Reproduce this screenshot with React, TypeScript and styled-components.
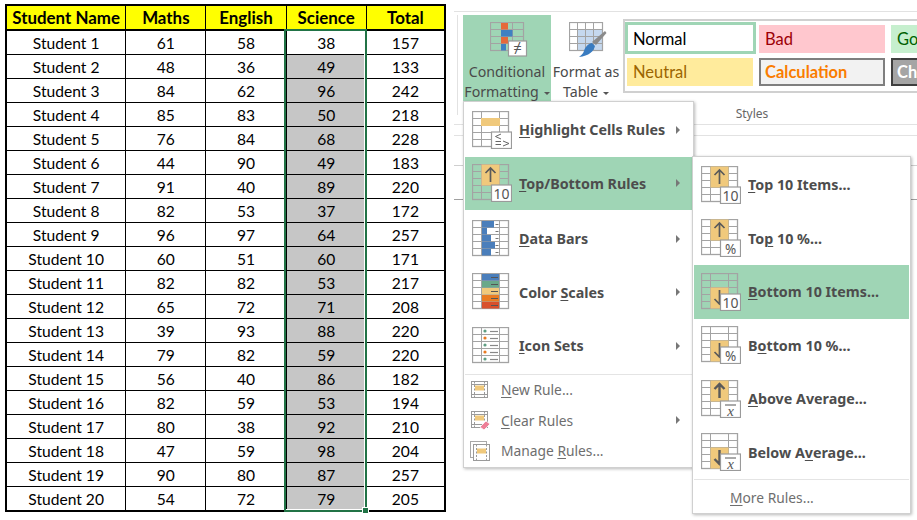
import React from "react";
import styled, { createGlobalStyle } from "styled-components";

const Global = createGlobalStyle`
  html, body { margin: 0; padding: 0; background: #fff; }
  body { width: 917px; height: 520px; overflow: hidden; }
`;

const UI_FONT = `"Noto Sans", "Open Sans", sans-serif`;
const CELL_FONT = `Lato, "Liberation Sans", sans-serif`;
const GREEN = "#9fd5b5";

const Page = styled.div`
  display: flex;
  width: 917px;
  height: 520px;
  overflow: hidden;
`;

const SheetWrap = styled.div`
  position: relative;
  flex: none;
  width: 441px;
  margin: 4px 0 0 5px;
  align-self: flex-start;
`;

const Sheet = styled.table`
  border-collapse: separate;
  border-spacing: 0;
  table-layout: fixed;
  box-sizing: border-box;
  width: 441px;
  border: 2px solid #000;
  font-family: ${CELL_FONT};
  font-size: 15.6px;
  color: #000;
`;

const HeadCell = styled.th<{ $w: number }>`
  width: ${(p) => p.$w}px;
  height: 23px;
  padding: 0;
  box-sizing: content-box;
  background: #ffff00;
  font-size: 16.9px;
  font-weight: 700;
  text-align: center;
  white-space: nowrap;
  border-bottom: 2px solid #000;
  border-right: 1px solid #000;
  &:last-child { border-right: none; }
`;

const Cell = styled.td<{ $shaded?: boolean }>`
  height: 23px;
  padding: 0;
  box-sizing: content-box;
  text-align: center;
  background: ${(p) => (p.$shaded ? "#c6c6c6" : "#fff")};
  border-bottom: 1px solid #000;
  border-right: 1px solid #000;
  &:last-child { border-right: none; }
  tr:last-child > & { border-bottom: none; }
`;

const Selection = styled.div`
  position: absolute;
  left: 279px;
  top: 25px;
  width: 83px;
  height: 483px;
  box-sizing: border-box;
  border: 2px solid #217346;
  box-shadow: inset -1px -1px 0 #fff;
  pointer-events: none;
`;

const FillHandle = styled.div`
  position: absolute;
  right: -4px;
  bottom: -4px;
  width: 5px;
  height: 5px;
  background: #217346;
  border: 1px solid #fff;
`;

const Pane = styled.div`
  position: relative;
  flex: 1;
  padding: 11px 0 0 8px;
  font-family: ${UI_FONT};
  color: #444;
  overflow: hidden;
`;

const Ribbon = styled.div`
  display: flex;
  align-items: flex-start;
  padding: 3px 0 0 1px;
  border-top: 1.5px solid #e2e2e2;
  border-bottom: 1.5px solid #e2e2e2;
  overflow: hidden;
  box-sizing: border-box;
  height: 114px;
`;

const RibbonSep = styled.div`
  flex: none;
  width: 1px;
  height: 100px;
  margin: 0 5px 0 2px;
  background: #e2e2e2;
`;

const SheetRule = styled.div<{ $gap: number; $tone: string }>`
  height: 1px;
  margin-top: ${(p) => p.$gap}px;
  background: ${(p) => p.$tone};
`;

const BigButton = styled.div<{ $active?: boolean; $w: number }>`
  flex: none;
  display: flex;
  flex-direction: column;
  align-items: center;
  width: ${(p) => p.$w}px;
  height: 86px;
  padding-top: 7px;
  box-sizing: border-box;
  background: ${(p) => (p.$active ? GREEN : "transparent")};
`;

const BigLabel = styled.div`
  font-size: 14.2px;
  line-height: 20px;
  margin-top: 5px;
  text-align: center;
  white-space: nowrap;
  color: #4a4a4a;
`;

const Caret = styled.span`
  display: inline-block;
  width: 0;
  height: 0;
  margin-left: 5px;
  vertical-align: 2px;
  border-left: 3px solid transparent;
  border-right: 3px solid transparent;
  border-top: 3px solid #555;
`;

const StylesGroup = styled.div`
  flex: none;
  width: 294px;
  margin: 4px 0 0 2px;
`;

const Gallery = styled.div`
  display: grid;
  grid-template-columns: repeat(3, 132px);
  grid-auto-rows: 33px;
  height: 74px;
  box-sizing: border-box;
  padding-top: 1px;
  border: 2px solid #d0d0d0;
  border-right: none;
`;

const StyleChip = styled.div<{ $bg: string; $fg: string; $bold?: boolean; $edge?: string; $selected?: boolean }>`
  display: flex;
  align-items: center;
  box-sizing: border-box;
  height: ${(p) => (p.$selected ? "32px" : "28px")};
  width: ${(p) => (p.$selected ? "131px" : "126px")};
  margin: ${(p) => (p.$selected ? "0" : "3px 0 0 2px")};
  padding-left: ${(p) => (p.$selected ? "5px" : p.$edge ? "4px" : "6px")};
  padding-top: ${(p) => (p.$selected ? "1px" : "0")};
  background: ${(p) => p.$bg};
  color: ${(p) => p.$fg};
  border: ${(p) => (p.$selected ? `3px solid ${GREEN}` : p.$edge ? `2px solid ${p.$edge}` : "none")};
  font-family: ${CELL_FONT};
  font-size: 16.5px;
  font-weight: ${(p) => (p.$bold ? 700 : 400)};
  white-space: nowrap;
  overflow: hidden;
`;

const GroupLabel = styled.div`
  width: 258px;
  margin-top: 13px;
  text-align: center;
  font-size: 12px;
  line-height: 16px;
  color: #666;
`;

const Menu = styled.div<{ $left: number; $top: number; $w: number; $h: number }>`
  position: absolute;
  left: ${(p) => p.$left}px;
  top: ${(p) => p.$top}px;
  width: ${(p) => p.$w}px;
  height: ${(p) => p.$h}px;
  box-sizing: border-box;
  padding: 1px 1px 0 1px;
  background: #fff;
  border: 1px solid #d0d0d0;
  box-shadow: 1px 1px 3px rgba(0, 0, 0, 0.28);
`;

const BigItem = styled.div<{ $active?: boolean; $drop?: number }>`
  display: flex;
  align-items: center;
  height: 53.5px;
  margin-top: ${(p) => p.$drop ?? 0}px;
  padding: 0 12px 0 7px;
  box-sizing: border-box;
  background: ${(p) => (p.$active ? GREEN : "transparent")};
  font-size: 14.3px;
  font-weight: 700;
  color: #4d4d4d;
  white-space: nowrap;
`;

const ItemIcon = styled.span`
  flex: none;
  display: flex;
  width: 40px;
  height: 38px;
  margin-right: 7px;
`;

const SmallItem = styled.div`
  display: flex;
  align-items: center;
  height: 30.5px;
  padding: 0 12px 0 5px;
  font-size: 13.8px;
  color: #6e6e6e;
  white-space: nowrap;
`;

const SmallIcon = styled.span`
  flex: none;
  display: flex;
  width: 20px;
  height: 20px;
  margin-right: 11px;
`;

const MoreItem = styled.div`
  height: 34px;
  line-height: 35px;
  padding-left: 36px;
  font-size: 13.8px;
  color: #6e6e6e;
`;

const Chevron = styled.span`
  margin-left: auto;
  width: 0;
  height: 0;
  border-top: 4px solid transparent;
  border-bottom: 4px solid transparent;
  border-left: 4px solid #777;
`;

const MenuSep = styled.div<{ $mt: number }>`
  height: 1px;
  margin-top: ${(p) => p.$mt}px;
  background: #e4e4e4;
`;

const Key = styled.u`
  text-underline-offset: 2px;
  text-decoration-thickness: 1px;
`;

const LINE = "#a3a3a3";
const ORANGE = "#f0c97c";

function Grid() {
  return (
    <g stroke={LINE} strokeWidth="1" fill="none">
      <rect x="0.5" y="0.5" width="36" height="35" strokeWidth="1.3" />
      <path d="M9.5 0.5V35.5M27.5 0.5V35.5M0.5 7.5H36.5M0.5 14.5H36.5M0.5 21.5H36.5M0.5 28.5H36.5" />
    </g>
  );
}

function BadgeBox({ children }: { children: React.ReactNode }) {
  return (
    <g>
      <rect x="19.5" y="21" width="20" height="16.5" fill="#fff" stroke="#9a9a9a" strokeWidth="1.2" />
      {children}
    </g>
  );
}

const badgeText = { fontFamily: "'Noto Sans', sans-serif", fontWeight: 400, fill: "#555", textAnchor: "middle" as const };

function Badge({ kind }: { kind: "10" | "%" | "x" }) {
  if (kind === "10")
    return (
      <BadgeBox>
        <text x="29.5" y="34.5" fontSize="14" {...badgeText}>10</text>
      </BadgeBox>
    );
  if (kind === "%")
    return (
      <BadgeBox>
        <text x="29.5" y="34.5" fontSize="13.5" {...badgeText}>%</text>
      </BadgeBox>
    );
  return (
    <BadgeBox>
      <path d="M24 25H35" stroke="#555" strokeWidth="1" />
      <text x="29.5" y="35.5" fontSize="15" fontStyle="italic" fontWeight="400" fontFamily="'Liberation Serif', serif" fill="#555" textAnchor="middle">x</text>
    </BadgeBox>
  );
}

function Svg({ children }: { children: React.ReactNode }) {
  return (
    <svg width="40" height="38" viewBox="0 0 40 38" style={{ display: "block" }}>
      {children}
    </svg>
  );
}

function HighlightIcon() {
  return (
    <Svg>
      <Grid />
      <rect x="9" y="7" width="19" height="8" fill={ORANGE} />
      <BadgeBox>
        <path d="M29 23L23.5 25.5L29 28M23.5 30.5H29M23.5 33.5H29" stroke="#666" strokeWidth="1" fill="none" />
        <path d="M31 30L37 32.5L31 35" stroke="#666" strokeWidth="1" fill="none" />
      </BadgeBox>
    </Svg>
  );
}

function RankIcon({ up, kind, heavy }: { up: boolean; kind: "10" | "%" | "x"; heavy?: boolean }) {
  const sw = heavy ? 2.4 : 1.7;
  return (
    <Svg>
      <Grid />
      {up ? (
        <>
          <rect x="9.5" y="0.5" width="18" height="21" fill={ORANGE} />
          <path d="M18.5 18V4M13.5 9L18.5 4L23.5 9" stroke="#5a5a5a" strokeWidth={sw} fill="none" />
        </>
      ) : (
        <>
          <rect x="9.5" y="14.5" width="18" height="21" fill={ORANGE} />
          <path d="M18.5 17V31M13.5 26L18.5 31L23.5 26" stroke="#5a5a5a" strokeWidth={sw} fill="none" />
        </>
      )}
      <Badge kind={kind} />
    </Svg>
  );
}

function DataBarsIcon() {
  const bars = [12, 5, 9, 13, 9];
  return (
    <Svg>
      <Grid />
      {bars.map((w, i) => (
        <g key={i}>
          <rect x="10" y={1 + i * 7} width={w} height="6.5" fill="#4a7ebb" />
          <path d={`M23.5 ${4.5 + i * 7}H26.5`} stroke="#777" strokeWidth="1" />
        </g>
      ))}
    </Svg>
  );
}

function ColorScalesIcon() {
  const c = ["#4a7ebb", "#6aa88a", ORANGE, "#e97b22", "#d8502c"];
  return (
    <Svg>
      <Grid />
      {c.map((f, i) => (
        <g key={f}>
          <rect x="10" y={1 + i * 7} width="17" height="6.5" fill={f} />
          <path d={`M19 ${4.5 + i * 7}H26`} stroke="#555" strokeWidth="1" />
        </g>
      ))}
    </Svg>
  );
}

function IconSetsIcon() {
  const c = ["#5f9e82", "#e97b22", "#5f9e82", "#e97b22", "#5f9e82"];
  return (
    <Svg>
      <Grid />
      {c.map((f, i) => (
        <g key={i}>
          <circle cx="13" cy={4 + i * 7} r="1.6" fill={f} />
          <path d={`M18 ${4.5 + i * 7}H26`} stroke="#888" strokeWidth="1.2" />
        </g>
      ))}
    </Svg>
  );
}

function MiniGrid() {
  return (
    <g stroke="#9a9a9a" fill="none" strokeWidth="1">
      <rect x="1.5" y="1.5" width="16" height="16" />
      <path d="M4.5 1.5V17.5M14.5 1.5V17.5" strokeDasharray="2 1.5" />
      <path d="M1.5 14.5H17.5M1.5 4.5H17.5" />
    </g>
  );
}

function NewRuleIcon() {
  return (
    <svg width="20" height="20" viewBox="0 0 20 20">
      <MiniGrid />
      <rect x="5" y="5.5" width="9" height="5" fill={ORANGE} />
    </svg>
  );
}

function ClearRulesIcon() {
  return (
    <svg width="20" height="20" viewBox="0 0 20 20">
      <MiniGrid />
      <rect x="5" y="5.5" width="9" height="5" fill={ORANGE} />
      <path d="M10 17L16 11L20 14L14 20Z" fill="#ee7f97" stroke="#fff" strokeWidth="0.8" />
    </svg>
  );
}

function ManageRulesIcon() {
  return (
    <svg width="20" height="20" viewBox="0 0 20 20">
      <rect x="0.5" y="0.5" width="16" height="16" fill="none" stroke="#a8a8a8" />
      <g transform="translate(2 2)">
        <rect x="1.5" y="1.5" width="16" height="16" fill="#fff" stroke="#9a9a9a" />
        <path d="M4.5 1.5V17.5M14.5 1.5V17.5" stroke="#9a9a9a" strokeDasharray="2 1.5" />
        <rect x="5" y="5.5" width="9" height="5" fill={ORANGE} />
      </g>
    </svg>
  );
}

function ConditionalIcon() {
  return (
    <svg width="38" height="35" viewBox="0 0 38 35" style={{ display: "block", flex: "none", marginLeft: 3 }}>
      <g stroke="#a3a3a3" fill="none">
        <rect x="0.5" y="0.5" width="33" height="28" strokeWidth="1.2" />
        <path d="M11.5 0.5V28.5M22.5 0.5V28.5M0.5 7.5H33.5M0.5 14.5H33.5M0.5 21.5H33.5" />
      </g>
      <rect x="11" y="1" width="7" height="6.5" fill="#e5693a" />
      <rect x="11" y="8" width="11.5" height="6.5" fill="#3e81c2" />
      <rect x="11" y="15" width="7" height="6.5" fill="#e5693a" />
      <rect x="11" y="22" width="5" height="6.5" fill="#3e81c2" />
      <rect x="18.5" y="19" width="18" height="15" fill="#fff" stroke="#9a9a9a" strokeWidth="1.2" />
      <text x="27.5" y="31" fontSize="15" fontFamily="'Noto Sans', sans-serif" fill="#555" textAnchor="middle">≠</text>
    </svg>
  );
}

function TableIcon() {
  return (
    <svg width="38" height="35" viewBox="0 0 38 35" style={{ display: "block", flex: "none", marginLeft: 3 }}>
      <rect x="8" y="8" width="25" height="21" fill="#c5d8ee" />
      <g stroke="#a3a3a3" fill="none">
        <rect x="0.5" y="0.5" width="33" height="28" strokeWidth="1.2" />
        <path d="M8.5 0.5V28.5M16.5 0.5V28.5M24.5 0.5V28.5M0.5 7.5H33.5M0.5 14.5H33.5M0.5 21.5H33.5" />
      </g>
      <path d="M36 9L37.5 11L27 23L23 20Z" fill="#8a8a8a" />
      <path d="M23 21L26 24C25 29 20 34 10 35C12 33 14 32 15 29C16 25 20 21 23 21Z" fill="#3a7cc0" />
    </svg>
  );
}

const rows: [number, number, number, number, number][] = [
  [1, 61, 58, 38, 157], [2, 48, 36, 49, 133], [3, 84, 62, 96, 242], [4, 85, 83, 50, 218],
  [5, 76, 84, 68, 228], [6, 44, 90, 49, 183], [7, 91, 40, 89, 220], [8, 82, 53, 37, 172],
  [9, 96, 97, 64, 257], [10, 60, 51, 60, 171], [11, 82, 82, 53, 217], [12, 65, 72, 71, 208],
  [13, 39, 93, 88, 220], [14, 79, 82, 59, 220], [15, 56, 40, 86, 182], [16, 82, 59, 53, 194],
  [17, 80, 38, 92, 210], [18, 47, 59, 98, 204], [19, 90, 80, 87, 257], [20, 54, 72, 79, 205],
];

const headers: [string, number][] = [["Student Name", 118], ["Maths", 79], ["English", 79], ["Science", 79], ["Total", 77]];

export default function App() {
  return (
    <Page>
      <Global />
      <SheetWrap>
        <Sheet>
          <thead>
            <tr>
              {headers.map(([h, w]) => (
                <HeadCell key={h} $w={w}>{h}</HeadCell>
              ))}
            </tr>
          </thead>
          <tbody>
            {rows.map(([n, m, e, s, t]) => (
              <tr key={n}>
                <Cell>Student {n}</Cell>
                <Cell>{m}</Cell>
                <Cell>{e}</Cell>
                <Cell $shaded={n > 1}>{s}</Cell>
                <Cell>{t}</Cell>
              </tr>
            ))}
          </tbody>
        </Sheet>
        <Selection>
          <FillHandle />
        </Selection>
      </SheetWrap>

      <Pane>
        <Ribbon>
          <RibbonSep />
          <BigButton $active $w={88}>
            <ConditionalIcon />
            <BigLabel>
              Conditional
              <br />
              Formatting<Caret />
            </BigLabel>
          </BigButton>
          <BigButton $w={70}>
            <TableIcon />
            <BigLabel>
              Format as
              <br />
              Table<Caret />
            </BigLabel>
          </BigButton>
          <StylesGroup>
            <Gallery>
              <StyleChip $selected $bg="#fff" $fg="#000">Normal</StyleChip>
              <StyleChip $bg="#ffc7ce" $fg="#9c0006">Bad</StyleChip>
              <StyleChip $bg="#c6efce" $fg="#006100">Good</StyleChip>
              <StyleChip $bg="#ffeb9c" $fg="#9c6500">Neutral</StyleChip>
              <StyleChip $bg="#f2f2f2" $fg="#fa7d00" $bold $edge="#7f7f7f">Calculation</StyleChip>
              <StyleChip $bg="#a5a5a5" $fg="#fff" $bold $edge="#3f3f3f">Check Cell</StyleChip>
            </Gallery>
            <GroupLabel>Styles</GroupLabel>
          </StylesGroup>
        </Ribbon>
        <SheetRule $gap={10} $tone="#e2e2e2" />
        <SheetRule $gap={29} $tone="#cfcfcf" />
        <SheetRule $gap={33} $tone="#a0a0a0" />

        <Menu $left={17} $top={101} $w={231} $h={367}>
          <BigItem>
            <ItemIcon><HighlightIcon /></ItemIcon>
            <span><Key>H</Key>ighlight Cells Rules</span>
            <Chevron />
          </BigItem>
          <BigItem $active>
            <ItemIcon><RankIcon up kind="10" /></ItemIcon>
            <span><Key>T</Key>op/Bottom Rules</span>
            <Chevron />
          </BigItem>
          <BigItem $drop={2}>
            <ItemIcon><DataBarsIcon /></ItemIcon>
            <span><Key>D</Key>ata Bars</span>
            <Chevron />
          </BigItem>
          <BigItem>
            <ItemIcon><ColorScalesIcon /></ItemIcon>
            <span>Color <Key>S</Key>cales</span>
            <Chevron />
          </BigItem>
          <BigItem>
            <ItemIcon><IconSetsIcon /></ItemIcon>
            <span><Key>I</Key>con Sets</span>
            <Chevron />
          </BigItem>
          <MenuSep $mt={1} />
          <SmallItem>
            <SmallIcon><NewRuleIcon /></SmallIcon>
            <span><Key>N</Key>ew Rule...</span>
          </SmallItem>
          <SmallItem>
            <SmallIcon><ClearRulesIcon /></SmallIcon>
            <span><Key>C</Key>lear Rules</span>
            <Chevron />
          </SmallItem>
          <SmallItem>
            <SmallIcon><ManageRulesIcon /></SmallIcon>
            <span>Manage <Key>R</Key>ules...</span>
          </SmallItem>
        </Menu>

        <Menu $left={246} $top={156} $w={219} $h={358}>
          <BigItem>
            <ItemIcon><RankIcon up kind="10" /></ItemIcon>
            <span><Key>T</Key>op 10 Items...</span>
          </BigItem>
          <BigItem>
            <ItemIcon><RankIcon up kind="%" /></ItemIcon>
            <span>To<Key>p</Key> 10 %...</span>
          </BigItem>
          <BigItem $active>
            <ItemIcon><RankIcon up={false} kind="10" /></ItemIcon>
            <span><Key>B</Key>ottom 10 Items...</span>
          </BigItem>
          <BigItem>
            <ItemIcon><RankIcon up={false} kind="%" /></ItemIcon>
            <span>B<Key>o</Key>ttom 10 %...</span>
          </BigItem>
          <BigItem>
            <ItemIcon><RankIcon up kind="x" heavy /></ItemIcon>
            <span><Key>A</Key>bove Average...</span>
          </BigItem>
          <BigItem>
            <ItemIcon><RankIcon up={false} kind="x" heavy /></ItemIcon>
            <span>Below A<Key>v</Key>erage...</span>
          </BigItem>
          <MenuSep $mt={0} />
          <MoreItem><Key>M</Key>ore Rules...</MoreItem>
        </Menu>
      </Pane>
    </Page>
  );
}
